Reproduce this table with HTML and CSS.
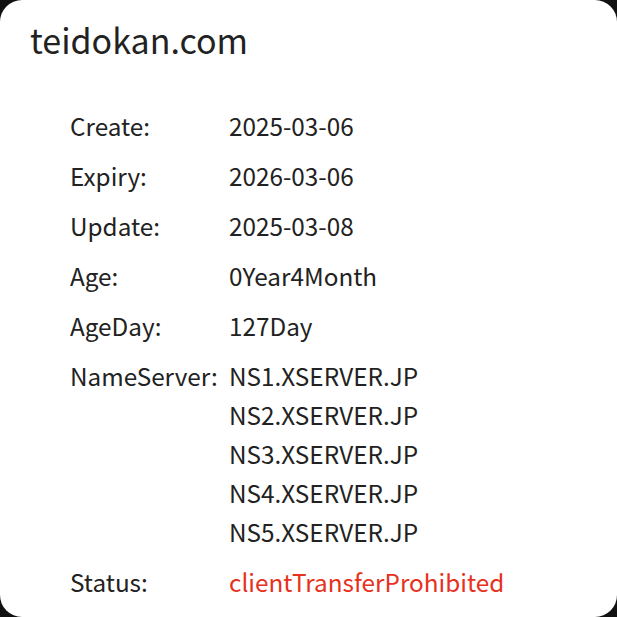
FILE: index.html
```html
<!DOCTYPE html>
<html>
<head>
<meta charset="utf-8">
<link rel="stylesheet" href="styles.css">
</head>
<body>
<div class="card">
  <h1 class="title">teidokan.com</h1>
  <div class="info">
    <div class="row"><div class="label">Create:</div><div class="value">2025-03-06</div></div>
    <div class="row"><div class="label">Expiry:</div><div class="value">2026-03-06</div></div>
    <div class="row"><div class="label">Update:</div><div class="value">2025-03-08</div></div>
    <div class="row"><div class="label">Age:</div><div class="value">0Year4Month</div></div>
    <div class="row"><div class="label">AgeDay:</div><div class="value">127Day</div></div>
    <div class="row"><div class="label">NameServer:</div><div class="value">
      <div>NS1.XSERVER.JP</div>
      <div>NS2.XSERVER.JP</div>
      <div>NS3.XSERVER.JP</div>
      <div>NS4.XSERVER.JP</div>
      <div>NS5.XSERVER.JP</div>
    </div></div>
    <div class="row"><div class="label">Status:</div><div class="value status">clientTransferProhibited</div></div>
  </div>
</div>
</body>
</html>
```

FILE: styles.css
```css
html, body {
  margin: 0;
  padding: 0;
  background: #111;
  width: 617px;
  height: 617px;
  overflow: hidden;
}
.card {
  box-sizing: border-box;
  width: 617px;
  height: 617px;
  background: #fff;
  border-radius: 22px;
  padding: 20px 30px 0 30px;
  font-family: "Noto Sans CJK JP", "Noto Sans", sans-serif;
  color: #222;
}
.title {
  margin: 0;
  font-size: 34px;
  font-weight: 400;
  line-height: 40px;
}
.info {
  margin-top: 46px;
  padding-left: 40px;
  display: flex;
  flex-direction: column;
  gap: 11px;
}
.row {
  display: flex;
  font-size: 24.3px;
  line-height: 39px;
}
.label {
  width: 159px;
  flex: none;
}
.status {
  color: #e8301c;
}
```
